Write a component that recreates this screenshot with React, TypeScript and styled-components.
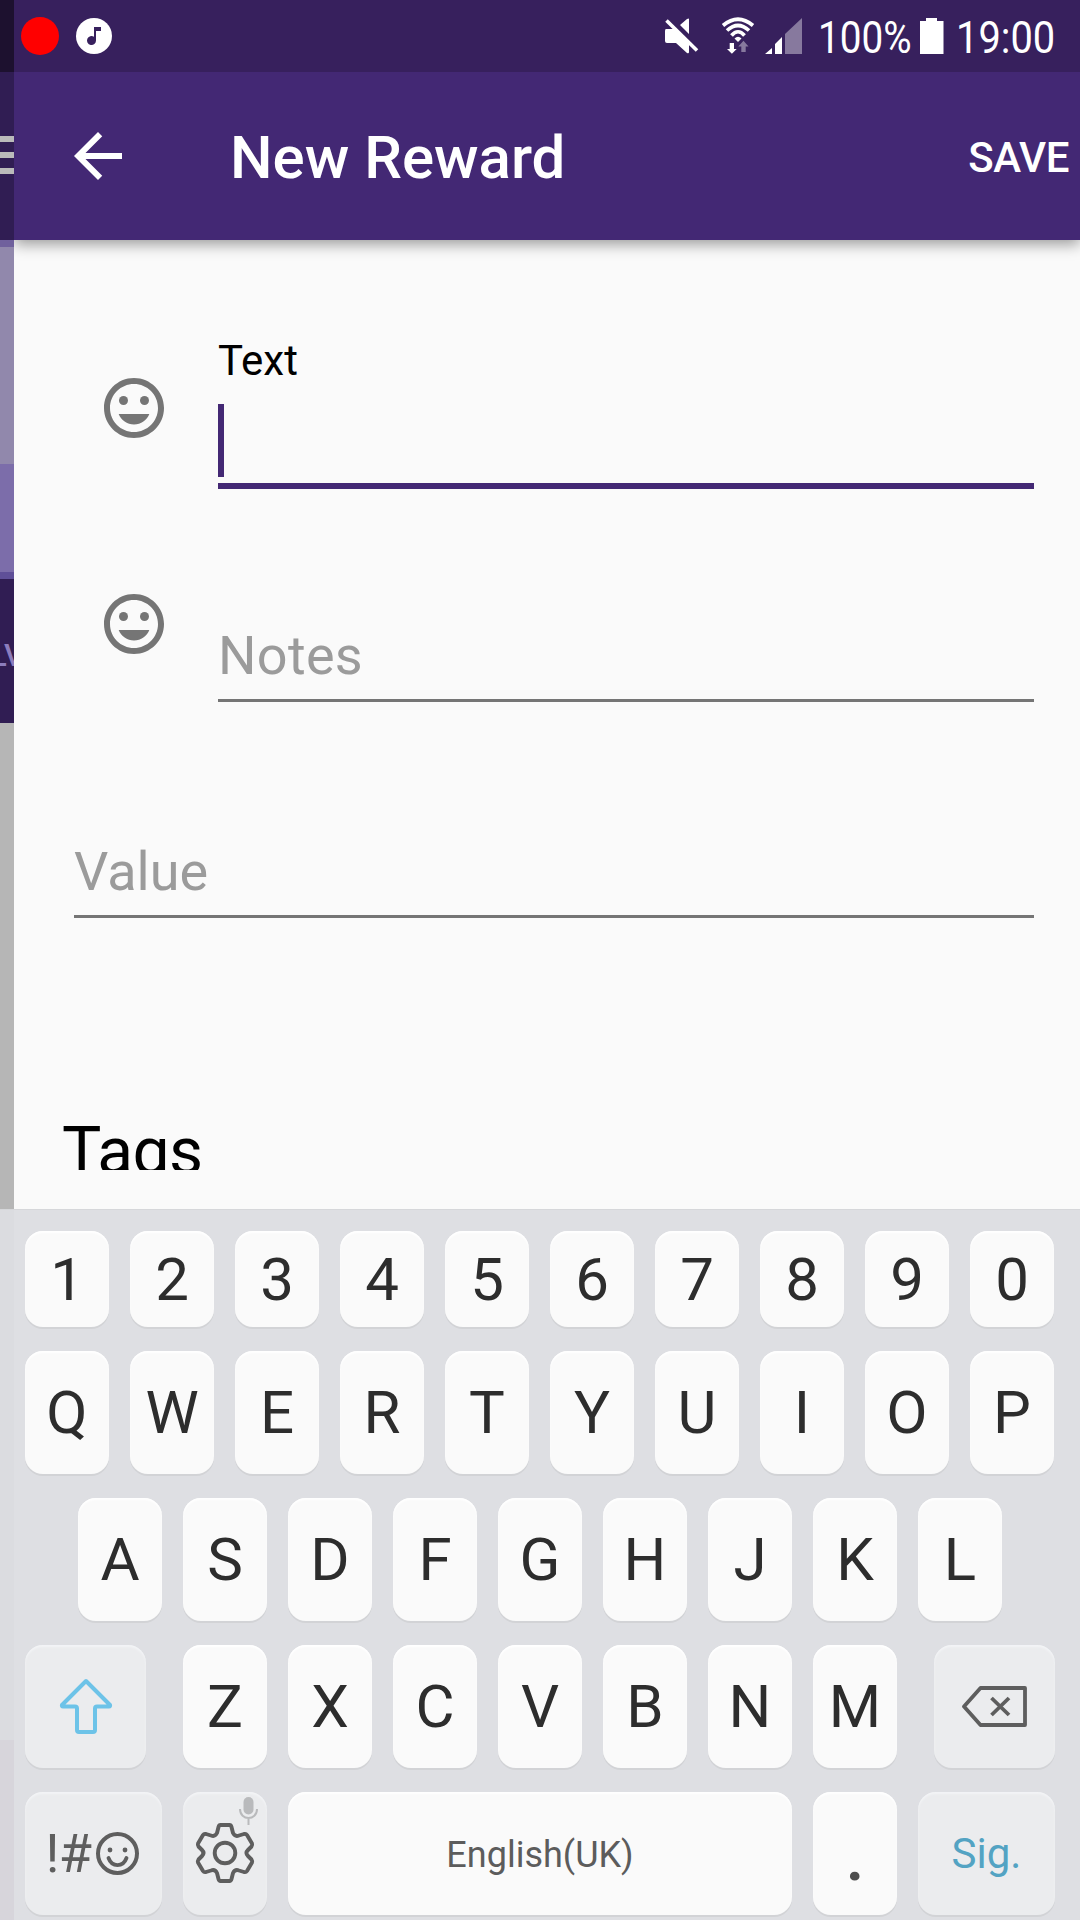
import React from "react";
import styled, { createGlobalStyle } from "styled-components";

const GlobalStyle = createGlobalStyle`
  html, body { margin: 0; padding: 0; background: #fafafa; }
  * { box-sizing: border-box; }
`;

const Screen = styled.div`
  width: 1080px;
  height: 1920px;
  overflow: hidden;
  display: flex;
  flex-direction: column;
  font-family: Roboto, "Noto Sans", sans-serif;
  background: #fafafa;
`;

const Upper = styled.div`
  height: 1209px;
  flex: none;
  display: flex;
`;

const Underlay = styled.aside`
  width: 14px;
  flex: none;
  overflow: hidden;
  display: flex;
  flex-direction: column;
`;

const Band = styled.div<{ $h: number; $bg: string }>`
  height: ${(p) => p.$h}px;
  flex: none;
  background: ${(p) => p.$bg};
`;

const MenuBand = styled(Band)`
  display: flex;
  flex-direction: column;
  gap: 10px;
  padding-top: 64px;
`;

const MenuLine = styled.i`
  height: 6px;
  background: #bababa;
`;

const TabBand = styled(Band)`
  display: flex;
  justify-content: flex-end;
  overflow: hidden;
  white-space: nowrap;
  color: #8c7dbd;
  font-size: 31px;
  font-weight: 500;
  line-height: 38px;
  padding-top: 58px;
`;

const TabText = styled.span`
  margin-right: -10px;
`;

const Page = styled.main`
  flex: 1;
  display: flex;
  flex-direction: column;
  min-width: 0;
`;

const StatusBar = styled.div`
  height: 72px;
  flex: none;
  display: flex;
  justify-content: space-between;
  background: #37205d;
  padding: 17px 26px 0 7px;
  color: #fff;
`;

const StatusGroup = styled.div`
  display: flex;
  align-items: flex-start;
`;

const RecordDot = styled.i`
  width: 38px;
  height: 38px;
  border-radius: 50%;
  background: #f00;
  margin-right: 17px;
`;

const Glyph = styled.svg<{ $l?: number; $t?: number }>`
  display: block;
  flex: none;
  overflow: visible;
  margin-left: ${(p) => p.$l ?? 0}px;
  margin-top: ${(p) => p.$t ?? 0}px;
`;

const StatusText = styled.span<{ $w: number; $l: number; $scale: number }>`
  width: ${(p) => p.$w}px;
  margin-left: ${(p) => p.$l}px;
  font-size: 45px;
  line-height: 42px;
  white-space: nowrap;
  transform: scaleX(${(p) => p.$scale});
  transform-origin: 0 50%;
`;

const AppBar = styled.header`
  height: 168px;
  flex: none;
  display: flex;
  align-items: center;
  background: #432874;
  color: #fff;
  padding: 0 11px 0 48px;
  box-shadow: 0 4px 14px rgba(0, 0, 0, 0.4);
  clip-path: inset(0 0 -24px 0);
`;

const Title = styled.h1`
  flex: 1;
  margin: 4px 0 0 96px;
  font-size: 60px;
  line-height: 70px;
  font-weight: 500;
`;

const Save = styled.span`
  margin-top: 4px;
  font-size: 42px;
  line-height: 50px;
  font-weight: 500;
  letter-spacing: -0.4px;
`;

const Form = styled.section`
  flex: none;
  height: 930px;
  overflow: hidden;
  display: flex;
  flex-direction: column;
  padding: 96px 46px 0 60px;
`;

const FieldRow = styled.div`
  height: 216px;
  flex: none;
  display: flex;
`;

const IconCell = styled.div`
  width: 144px;
  flex: none;
  padding: 36px 0 0 24px;
`;

const Field = styled.div<{ $active?: boolean }>`
  flex: 1;
  height: ${(p) => (p.$active ? 153 : 150)}px;
  border-bottom: ${(p) => (p.$active ? "6px solid #432874" : "3px solid #757575")};
  display: flex;
  flex-direction: column;
  justify-content: ${(p) => (p.$active ? "flex-start" : "flex-end")};
`;

const ActiveLabel = styled.label`
  font-size: 42px;
  line-height: 50px;
  color: #000;
`;

const Caret = styled.i`
  width: 6px;
  height: 73px;
  margin-top: 18px;
  background: #432874;
`;

const Placeholder = styled.span<{ $track?: number }>`
  font-size: 54px;
  line-height: 64px;
  margin-bottom: 11px;
  letter-spacing: ${(p) => p.$track ?? 0}px;
  color: #9b9b9b;
`;

const TagsTitle = styled.h2`
  margin: 129px 0 0 -12px;
  font-size: 66px;
  line-height: 78px;
  font-weight: 400;
  letter-spacing: -0.6px;
  color: #000;
  flex: none;
`;

const Keyboard = styled.section`
  flex: 1;
  display: flex;
  flex-direction: column;
  gap: 24px;
  padding: 22px 25px 0;
  background:
    linear-gradient(to bottom, #dbdce0 531px, #d7d5db 531px) 0 0 / 14px 100% no-repeat,
    #dedfe3;
  box-shadow: inset 0 1px 0 #d6d7da;
`;

const KeyRow = styled.div<{ $h?: number; $indent?: number }>`
  height: ${(p) => p.$h ?? 123}px;
  flex: none;
  display: flex;
  gap: 21px;
  padding-left: ${(p) => p.$indent ?? 0}px;
`;

const Key = styled.div<{ $w?: number; $soft?: boolean; $ml?: number; $drop?: number }>`
  position: relative;
  width: ${(p) => p.$w ?? 84}px;
  height: 100%;
  flex: none;
  margin-left: ${(p) => p.$ml ?? 0}px;
  padding-top: ${(p) => p.$drop ?? 0}px;
  display: flex;
  align-items: center;
  justify-content: center;
  border-radius: 18px;
  font-size: 60px;
  line-height: 70px;
  color: #2d2d2d;
  background: ${(p) => (p.$soft ? "#ebecee" : "#fafafa")};
  box-shadow: 0 2px 0 #d2d3d6, inset 0 2px 2px ${(p) => (p.$soft ? "#f3f4f6" : "#ffffff")};
`;

const SpaceLabel = styled.span`
  margin-top: 2px;
  font-size: 36px;
  line-height: 42px;
  color: #5c5c5c;
`;

const NextLabel = styled.span`
  margin-top: 1px;
  font-size: 42px;
  line-height: 50px;
  color: #53a3c3;
`;

const SymLabel = styled.span`
  font-size: 54px;
  line-height: 60px;
  color: #5e5e5e;
  letter-spacing: -0.5px;
  margin-left: -2px;
  margin-right: 5px;
`;

const PeriodLabel = styled.span`
  color: #4e4e4e;
  font-weight: 700;
  margin-top: 13px;
`;

const MicBadge = styled.svg`
  position: absolute;
  right: 9px;
  top: 5px;
`;

const Smiley = () => (
  <Glyph width="72" height="72" viewBox="0 0 24 24" fill="#757575">
    <path d="M11.99 2C6.47 2 2 6.48 2 12s4.47 10 9.99 10C17.52 22 22 17.52 22 12S17.52 2 11.99 2zM12 20c-4.42 0-8-3.58-8-8s3.58-8 8-8 8 3.58 8 8-3.58 8-8 8z" />
    <circle cx="15.5" cy="9.5" r="1.5" />
    <circle cx="8.5" cy="9.5" r="1.5" />
    <path d="M12 17.5c2.33 0 4.31-1.46 5.11-3.5H6.89c.8 2.04 2.78 3.5 5.11 3.5z" />
  </Glyph>
);

const letters = (s: string, drop = 0) =>
  s.split("").map((c) => (
    <Key key={c} $drop={drop}>
      {c}
    </Key>
  ));

export default function App() {
  return (
    <Screen>
      <GlobalStyle />
      <Upper>
        <Underlay>
          <Band $h={72} $bg="#1d112f" />
          <MenuBand $h={168} $bg="#301d53">
            <MenuLine />
            <MenuLine />
            <MenuLine />
          </MenuBand>
          <Band $h={7} $bg="#70619d" />
          <Band $h={217} $bg="#9188ac" />
          <Band $h={108} $bg="#7c6daa" />
          <Band $h={7} $bg="#5f4f98" />
          <TabBand $h={144} $bg="#301d53">
            <TabText>LV</TabText>
          </TabBand>
          <Band $h={486} $bg="#b6b6b6" />
        </Underlay>
        <Page>
          <StatusBar>
            <StatusGroup>
              <RecordDot />
              <Glyph $t={1} width="36" height="36" viewBox="0 0 36 36">
                <circle cx="18" cy="18" r="18" fill="#fff" />
                <path d="M18 9h7v4h-5v9.500a4.500 4.500 0 1 1-2-3.700z" fill="#37205d" />
              </Glyph>
            </StatusGroup>
            <StatusGroup>
              <Glyph $t={1} width="34" height="36" viewBox="0 0 34 36" fill="#fff">
                <path d="M2 11H1Q0 11 0 13V23Q0 25 2 25H11L22 35Q24 36 24 34V25L10 11zM24 16V1Q24 0 22 1L15 7z" />
                <path d="M1.500 2.500L32 32.500" stroke="#fff" strokeWidth="3.600" />
              </Glyph>
              <Glyph $l={23} $t={0} width="32" height="37" viewBox="0 0 32 37">
                <g fill="none" stroke="#fff" strokeWidth="3.700">
                  <path d="M1 8.500Q16-4 31 8.500" />
                  <path d="M5 13.500Q16 3.500 27 13.500" />
                  <path d="M9.500 18.500Q16 11 22.500 18.500" />
                </g>
                <path d="M12.500 21.500Q16 18 19.500 21.500L16 25z" fill="#fff" />
                <path d="M7.700 26H12v6h2.700L9.900 36.700L5 32h2.700z" fill="#fff" />
                <path d="M19.300 35h4.400v-5.500h2.800l-5-5.800-5.200 5.800h3z" fill="#87799e" />
              </Glyph>
              <Glyph $l={11} $t={1} width="37" height="36" viewBox="0 0 37 36">
                <path d="M0 36L7 30V36zM10 36V26L17 19V36z" fill="#fff" />
                <path d="M20 36V16L37 0V36z" fill="#87799e" />
              </Glyph>
              <StatusText $l={16} $w={92} $scale={0.86}>100%</StatusText>
              <Glyph $l={10} $t={1} width="24" height="36" viewBox="0 0 24 36">
                <path d="M6 0H17V3H23.500V36H0V3H6z" fill="#fff" />
              </Glyph>
              <StatusText $l={12} $w={98} $scale={0.885}>19:00</StatusText>
            </StatusGroup>
          </StatusBar>
          <AppBar>
            <Glyph width="72" height="72" viewBox="0 0 24 24" fill="#fff">
              <path d="M20 11H7.830l5.590-5.590L12 4l-8 8 8 8 1.410-1.410L7.830 13H20v-2z" />
            </Glyph>
            <Title>New Reward</Title>
            <Save>SAVE</Save>
          </AppBar>
          <Form>
            <FieldRow>
              <IconCell>
                <Smiley />
              </IconCell>
              <Field $active>
                <ActiveLabel>Text</ActiveLabel>
                <Caret />
              </Field>
            </FieldRow>
            <FieldRow>
              <IconCell>
                <Smiley />
              </IconCell>
              <Field>
                <Placeholder $track={0.3}>Notes</Placeholder>
              </Field>
            </FieldRow>
            <FieldRow>
              <Field>
                <Placeholder>Value</Placeholder>
              </Field>
            </FieldRow>
            <TagsTitle>Tags</TagsTitle>
          </Form>
        </Page>
      </Upper>
      <Keyboard>
        <KeyRow $h={96}>{letters("1234567890", 2)}</KeyRow>
        <KeyRow>{letters("QWERTYUIOP")}</KeyRow>
        <KeyRow $indent={53}>{letters("ASDFGHJKL")}</KeyRow>
        <KeyRow>
          <Key $w={121} $soft>
            <Glyph $t={-2} width="54" height="56" viewBox="0 0 54 56">
              <path
                d="M27 3L51 27Q51.500 28.500 50 28.500H38Q36 28.500 36 30.500V52Q36 54 34 54H20Q18 54 18 52V30.500Q18 28.500 16 28.500H4Q2.500 28.500 3 27Z"
                fill="none"
                stroke="#6dc3e8"
                strokeWidth="4"
                strokeLinejoin="round"
              />
            </Glyph>
          </Key>
          <Key $ml={16}>Z</Key>
          {letters("XCVBNM")}
          <Key $w={121} $ml={16} $soft>
            <Glyph width="65" height="41" viewBox="0 0 65 41" fill="none" stroke="#5e5e5e">
              <path d="M2 20.500L18.500 2H63V39H18.500Z" strokeWidth="3.800" strokeLinejoin="round" />
              <path d="M29.500 12L47 29M47 12L29.500 29" strokeWidth="3.800" />
            </Glyph>
          </Key>
        </KeyRow>
        <KeyRow>
          <Key $w={137} $soft>
            <SymLabel>!#</SymLabel>
            <Glyph $t={-1} width="43" height="43" viewBox="0 0 43 43">
              <circle cx="20.500" cy="21.500" r="19.500" fill="none" stroke="#5e5e5e" strokeWidth="4" />
              <circle cx="13" cy="18" r="2.400" fill="#5e5e5e" />
              <circle cx="28" cy="18" r="2.400" fill="#5e5e5e" />
              <path d="M11.500 26C15 35.500 26 35.500 29.500 26" fill="none" stroke="#5e5e5e" strokeWidth="3.800" strokeLinecap="round" />
            </Glyph>
          </Key>
          <Key $soft>
            <Glyph $t={-1} $l={-1} width="58" height="60" viewBox="0 0 58 60" fill="none" stroke="#5e5e5e" strokeWidth="3.900" strokeLinejoin="round">
              <path d="M24.500 2H33.500Q35 2 35.500 4L37 10Q39 14 43 12.500L48 11Q50 10.500 51 12L56 20.500Q56.500 22 55.500 23.500L52 27Q49 30 52 33L55.500 36.500Q56.500 38 56 39.500L51 48Q50 49.500 48 49L43 47.500Q39 46 37 50L35.500 56Q35 58 33.500 58H24.500Q23 58 22.500 56L21 50Q19 46 15 47.500L10 49Q8 49.500 7 48L2 39.500Q1.500 38 2.500 36.500L6 33Q9 30 6 27L2.500 23.500Q1.500 22 2 20.500L7 12Q8 10.500 10 11L15 12.500Q19 14 21 10L22.500 4Q23 2 24.500 2Z" />
              <circle cx="29" cy="30" r="10.300" />
            </Glyph>
            <MicBadge width="19" height="28" viewBox="0 0 19 28">
              <rect x="4.500" y="0" width="10" height="17.500" rx="5" fill="#b9babc" />
              <path d="M1 12C1 24 18 24 18 12M9.500 21V28" fill="none" stroke="#b9babc" strokeWidth="2" />
            </MicBadge>
          </Key>
          <Key $w={504}>
            <SpaceLabel>English(UK)</SpaceLabel>
          </Key>
          <Key>
            <PeriodLabel>.</PeriodLabel>
          </Key>
          <Key $w={137} $soft>
            <NextLabel>Sig.</NextLabel>
          </Key>
        </KeyRow>
      </Keyboard>
    </Screen>
  );
}
